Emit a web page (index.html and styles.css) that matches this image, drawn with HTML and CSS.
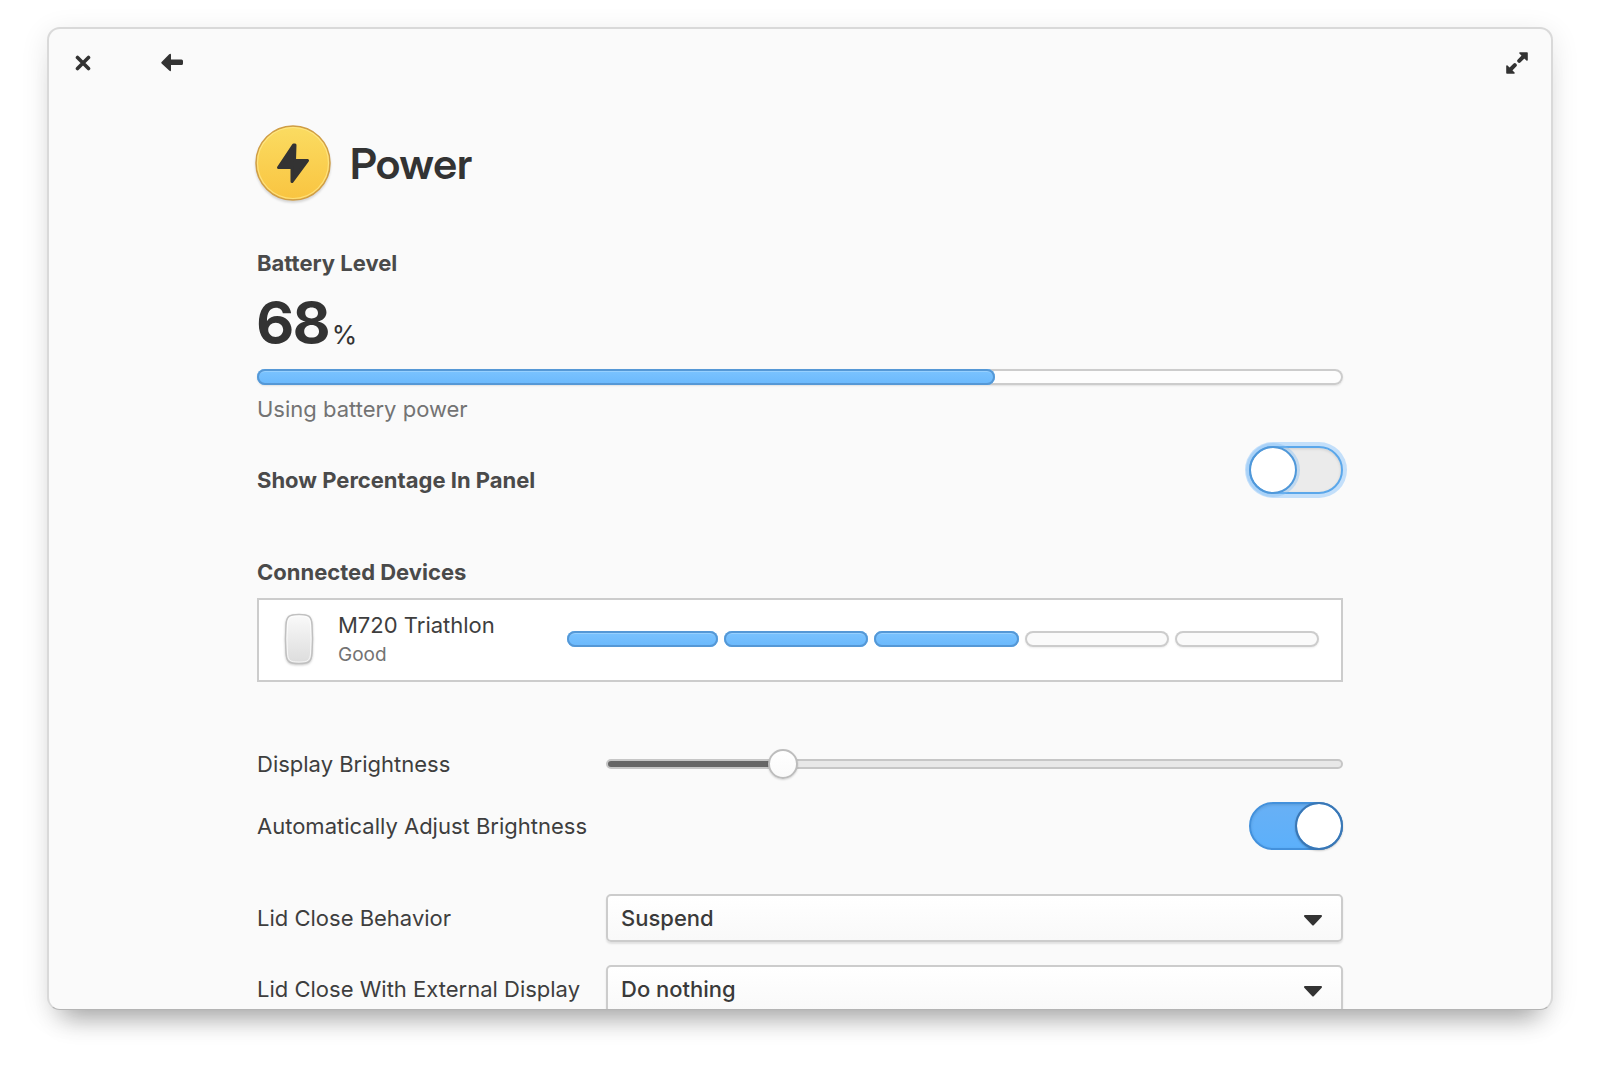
FILE: index.html
```html
<!DOCTYPE html>
<html lang="en">
<head>
<meta charset="utf-8">
<meta name="viewport" content="width=device-width, initial-scale=1">
<title>Power</title>
<link rel="stylesheet" href="styles.css">
</head>
<body>
<div class="window">
  <header class="titlebar">
    <button class="icon-button" type="button" aria-label="Close">
      <svg width="16" height="16" viewBox="0 0 16 16"><path d="M2.500 2.500l11 11M13.500 2.500l-11 11" fill="none" stroke="currentColor" stroke-width="3.600" stroke-linecap="round"/></svg>
    </button>
    <button class="icon-button" type="button" aria-label="Back">
      <svg width="24" height="20" viewBox="0 0 24 20"><path d="M1.600 9L9.200 1.200Q11 0 11 2V6.500H21.500Q23 6.500 23 8V10.500Q23 12 21.500 12H11V17Q11 19 9.200 17.600L1.600 10.400Q.8 9.700 1.600 9z" fill="currentColor"/></svg>
    </button>
    <button class="icon-button maximize" type="button" aria-label="Maximize">
      <svg width="22" height="22" viewBox="0 0 22 22" fill="currentColor" stroke="currentColor" stroke-linecap="round" stroke-linejoin="round"><path d="M14 1h7v7zM1 14v7h7z" stroke-width="1.600"/><path d="M13.200 8.800L18 4M8.800 13.200L4 18" stroke-width="4"/></svg>
    </button>
  </header>

  <main class="content">
    <div class="page-title">
      <svg class="page-icon" width="72" height="72" viewBox="0 0 72 72" aria-hidden="true">
        <defs>
          <linearGradient id="gold" x1="0" y1="0" x2="0" y2="1"><stop offset="0" stop-color="#fbdc62"/><stop offset="1" stop-color="#f9c440"/></linearGradient>
        </defs>
        <circle cx="36" cy="36" r="37" fill="url(#gold)" stroke="#cf9d45" stroke-width="1.500"/>
        <circle cx="36" cy="36" r="35.500" fill="none" stroke="#ffe991" stroke-width="1.200" opacity=".7"/>
        <path d="M36.500 18L21.500 40.500H35L35 54.500L50.500 33.500H37.500L38 18z" fill="#333" stroke="#333" stroke-width="3" stroke-linejoin="round"/>
      </svg>
      <h1>Power</h1>
    </div>

    <section class="battery">
      <h2 id="battery-title">Battery Level</h2>
      <p class="percentage"><strong>68</strong><span>%</span></p>
      <progress class="charge" value="68" max="100" aria-labelledby="battery-title"></progress>
      <p class="status">Using battery power</p>
    </section>

    <div class="panel-row">
      <label for="show-percentage">Show Percentage In Panel</label>
      <input class="switch focused" id="show-percentage" type="checkbox" role="switch">
    </div>

    <section class="devices">
      <h2>Connected Devices</h2>
      <div class="device">
        <svg class="mouse" width="30" height="52" viewBox="0 0 30 52" aria-hidden="true">
          <defs><linearGradient id="shell" x1="0" y1="0" x2="0" y2="1"><stop offset="0" stop-color="#fafafa"/><stop offset="1" stop-color="#dcdcdc"/></linearGradient></defs>
          <path d="M15 1.500C25 1.500 27.500 3 28 12Q29 26 28 40C27.500 49 25 50.500 15 50.500S2.500 49 2 40Q1 26 2 12C2.500 3 5 1.500 15 1.500z" fill="url(#shell)" stroke="#c0c0c0" stroke-width="1.500"/>
          <path d="M15 3C24 3 26 4.500 26.500 12Q27.500 26 26.500 40C26 47.500 24 49 15 49S4 47.500 3.500 40Q2.500 26 3.500 12C4 4.500 6 3 15 3z" fill="none" stroke="#fff" opacity=".7"/>
        </svg>
        <div class="device-info">
          <p class="device-name">M720 Triathlon</p>
          <p class="device-state">Good</p>
        </div>
        <div class="levels" role="meter" aria-label="M720 Triathlon battery" aria-valuemin="0" aria-valuemax="5" aria-valuenow="3">
          <span class="level full"></span><span class="level full"></span><span class="level full"></span><span class="level"></span><span class="level"></span>
        </div>
      </div>
    </section>

    <form class="settings">
      <label for="brightness">Display Brightness</label>
      <input class="slider" id="brightness" type="range" min="0" max="255" value="58">
      <label for="auto-brightness">Automatically Adjust Brightness</label>
      <input class="switch" id="auto-brightness" type="checkbox" role="switch" checked>
    </form>

    <form class="settings lid">
      <label for="lid-close">Lid Close Behavior</label>
      <div class="select">
        <select id="lid-close"><option>Suspend</option><option>Do nothing</option></select>
        <svg width="20" height="13" viewBox="0 0 20 13" aria-hidden="true"><path d="M2 2h16L10 10.500z" fill="#333" stroke="#333" stroke-width="2" stroke-linejoin="round"/></svg>
      </div>
      <label for="lid-external">Lid Close With External Display</label>
      <div class="select">
        <select id="lid-external"><option>Do nothing</option><option>Suspend</option></select>
        <svg width="20" height="13" viewBox="0 0 20 13" aria-hidden="true"><path d="M2 2h16L10 10.500z" fill="#333" stroke="#333" stroke-width="2" stroke-linejoin="round"/></svg>
      </div>
    </form>
  </main>
</div>
</body>
</html>
```
FILE: styles.css
```css
*,
*::before {
  box-sizing: border-box;
}

body {
  display: flex;
  height: 100vh;
  margin: 0;
  padding: 27px 47px 71px;
  background: #fff;
  color: #3e3e3e;
  font: 400 22px/28px Inter, sans-serif;
}

h1,
h2,
p {
  margin: 0;
}

.window {
  flex: 1;
  min-width: 0;
  overflow: hidden;
  border: 2px solid #d9d9d9;
  border-bottom: 1px solid #b4b4b4;
  border-radius: 13px;
  background: #fafafa;
  box-shadow: 0 24px 24px -16px rgba(0, 0, 0, .3), 0 6px 28px rgba(0, 0, 0, .1);
}

.titlebar {
  display: flex;
  align-items: center;
  gap: 53px;
  height: 68px;
  padding: 0 16px;
}

.icon-button {
  display: grid;
  place-items: center;
  width: 36px;
  height: 36px;
  padding: 0;
  border: 0;
  background: none;
  color: #333;
}

.maximize {
  margin-left: auto;
}

.content {
  max-width: 1086px;
  margin: 0 auto;
  padding-top: 30px;
}

.page-title {
  display: flex;
  align-items: center;
  gap: 21px;
}

.page-icon {
  overflow: visible;
  filter: drop-shadow(0 2px 1px rgba(0, 0, 0, .15));
}

h1,
.percentage strong {
  font-family: "Inter Display", Inter, sans-serif;
}

h1 {
  color: #333;
  font-size: 43px;
  font-weight: 600;
  line-height: 56px;
}

h2,
.panel-row label {
  color: #4a4a4a;
  font-size: 22px;
  font-weight: 700;
  line-height: 28px;
}

.battery {
  margin-top: 50px;
}

.percentage {
  display: flex;
  align-items: baseline;
  gap: 2px;
  margin: 16px 0;
  color: #333;
  font-size: 26px;
}

.percentage strong {
  font-size: 59px;
  font-weight: 700;
  line-height: 60px;
}

.charge {
  display: block;
  width: 100%;
  height: 16px;
  border: 0;
  border-radius: 8px;
  background: none;
  box-shadow: 0 1px 2px rgba(0, 0, 0, .1);
  appearance: none;
}

.charge::-webkit-progress-bar {
  border-radius: 8px;
  background: #fdfdfd;
  box-shadow: inset 0 0 0 2px #ccc;
}

.charge::-webkit-progress-value,
.level.full {
  border-radius: 8px;
  background: linear-gradient(#7cc4ff, #6ab8fc);
  box-shadow: inset 0 0 0 2px #5598d6, inset 0 3px 0 #96d0ff;
}

.status {
  margin-top: 10px;
  color: #737373;
}

.panel-row {
  display: flex;
  align-items: flex-end;
  justify-content: space-between;
  margin-top: 23px;
}

.switch {
  position: relative;
  width: 94px;
  height: 48px;
  margin: 0;
  border: 2px solid #bbb;
  border-radius: 24px;
  background: #ebebeb;
  box-shadow: inset 0 1px 3px rgba(0, 0, 0, .12);
  appearance: none;
}

.switch::before {
  content: "";
  position: absolute;
  top: -2px;
  left: -2px;
  width: 48px;
  height: 48px;
  border: 2px solid #bbb;
  border-radius: 50%;
  background: #fff;
  background-clip: padding-box;
}

.switch.focused {
  border-color: #5ba7ea;
  box-shadow: 0 0 0 4px #c3dffa, inset 0 1px 3px rgba(0, 0, 0, .12);
}

.switch.focused::before {
  border-color: #4f98da;
  box-shadow: 0 0 0 3px rgba(130, 190, 245, .4);
}

.switch:checked {
  border-color: #4391dc;
  background: linear-gradient(#68b0f5, #5cb0fb);
}

.switch:checked::before {
  right: -2px;
  left: auto;
  border-color: #3a77b5;
  box-shadow: 0 1px 2px rgba(0, 0, 0, .2);
}

.devices {
  margin-top: 64px;
}

.device {
  display: flex;
  align-items: center;
  margin-top: 12px;
  padding: 11px 22px 13px 25px;
  border: 2px solid #ccc;
  background: #fff;
}

.mouse {
  filter: drop-shadow(0 1px 1px rgba(0, 0, 0, .2));
}

.device-info {
  width: 229px;
  margin-left: 24px;
}

.device-state {
  margin-top: 4px;
  color: #737373;
  font-size: 19px;
  line-height: 24px;
}

.levels {
  display: grid;
  flex: 1;
  grid-template-columns: 152fr repeat(4, 145fr);
  gap: 6px;
}

.level {
  height: 16px;
  border-radius: 8px;
  background: #fafafa;
  box-shadow: inset 0 0 0 2px #ccc, 0 1px 2px rgba(0, 0, 0, .08);
}

.settings {
  display: grid;
  grid-template-columns: 326px 1fr;
  align-items: center;
  gap: 23px;
  margin-top: 67px;
  white-space: nowrap;
}

.settings .switch {
  justify-self: end;
}

.settings.lid {
  margin-top: 44px;
}

.slider {
  width: 100%;
  height: 30px;
  margin: 0;
  background: none;
  appearance: none;
}

.slider::-webkit-slider-runnable-track {
  height: 10px;
  border: 2px solid #c6c6c6;
  border-radius: 5px;
  background: linear-gradient(90deg, #666 23%, #e8e8e8 23%) border-box;
}

.slider::-webkit-slider-thumb {
  box-sizing: border-box;
  width: 30px;
  height: 30px;
  margin-top: -12px;
  border: 2px solid #bdbdbd;
  border-radius: 50%;
  background: linear-gradient(#fff, #fafafa);
  box-shadow: 0 1px 2px rgba(0, 0, 0, .15);
  appearance: none;
}

.select {
  display: grid;
  align-items: center;
}

.select > * {
  grid-area: 1 / 1;
}

.select svg {
  justify-self: end;
  margin-top: 4px;
  margin-right: 20px;
  pointer-events: none;
}

select {
  width: 100%;
  height: 48px;
  padding: 0 13px;
  border: 2px solid #ccc;
  border-radius: 5px;
  background: linear-gradient(#fff, #f9f9f9);
  box-shadow: 0 2px 2px rgba(0, 0, 0, .1);
  color: #3a3a3a;
  font: 500 22px/28px Inter, sans-serif;
  appearance: none;
}
```
